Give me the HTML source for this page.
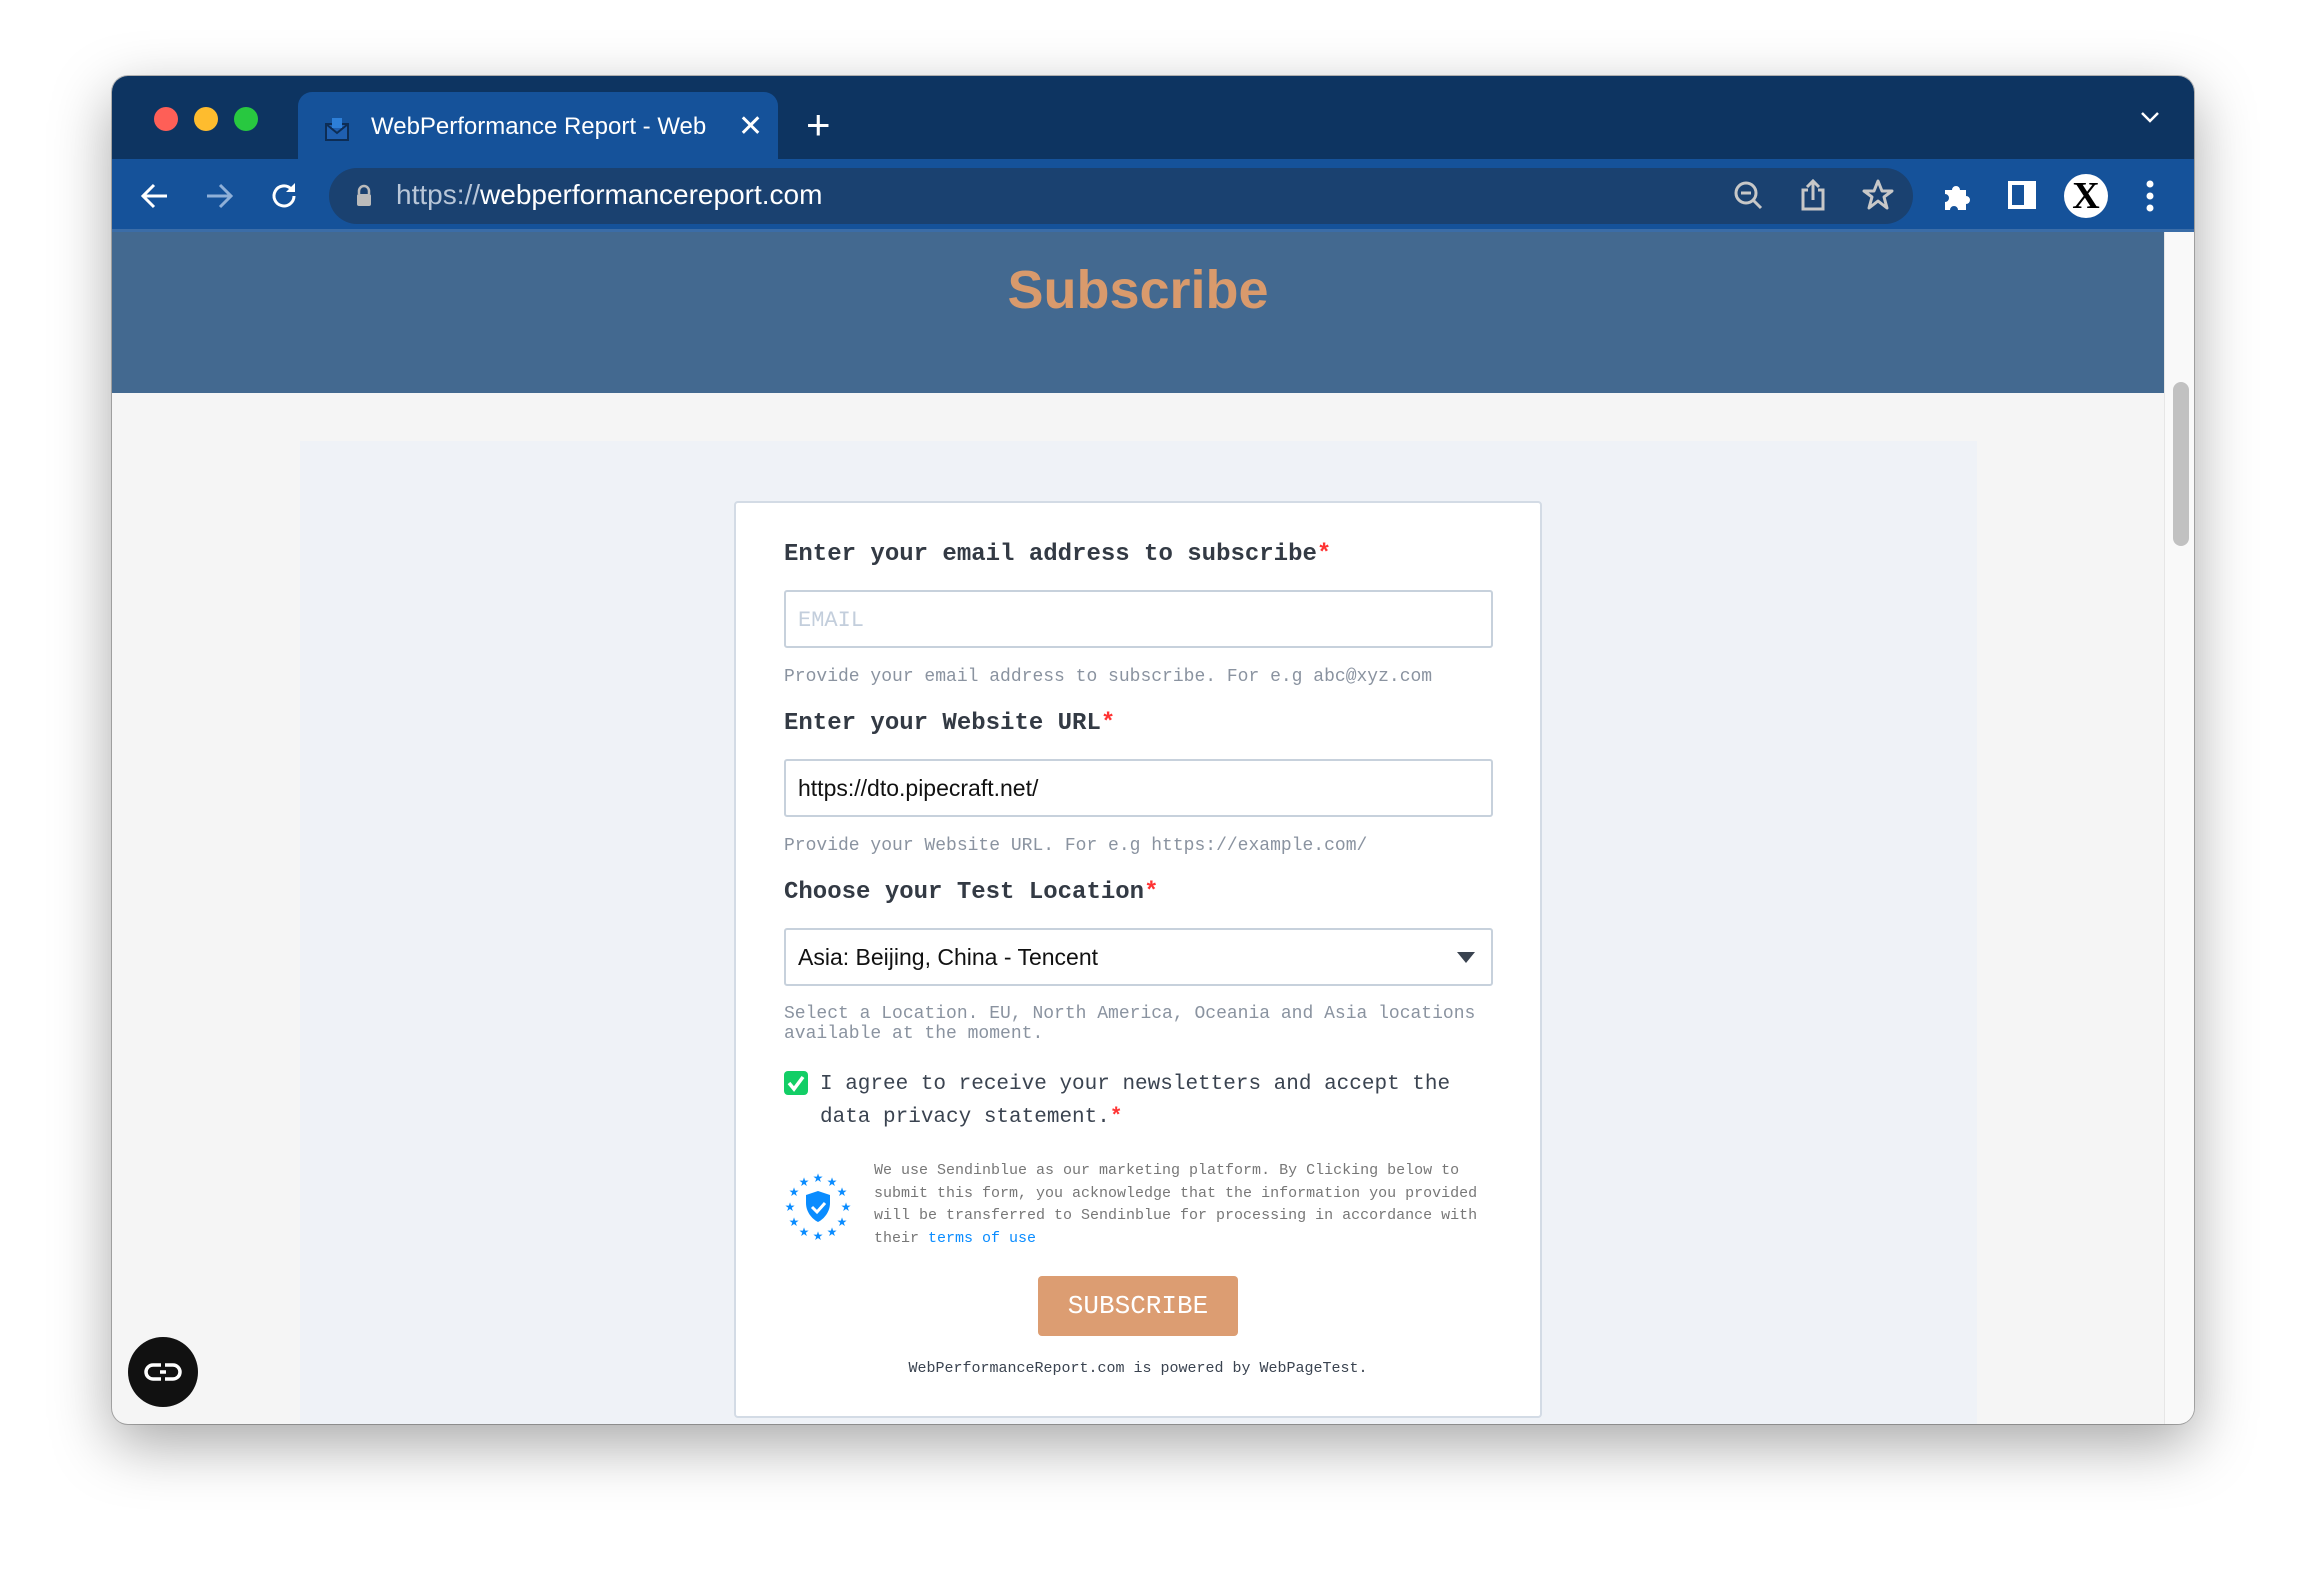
<!DOCTYPE html>
<html><head><meta charset="utf-8"><style>
*{margin:0;padding:0;box-sizing:border-box}
body{width:2306px;height:1572px;background:#fff;position:relative;overflow:hidden;font-family:"Liberation Sans",sans-serif}
.win{position:absolute;left:112px;top:76px;width:2082px;height:1348px;border-radius:16px;overflow:hidden;background:#f5f5f5;box-shadow:0 20px 60px rgba(0,0,0,.35),0 0 0 1px rgba(0,0,0,.25)}
.tabbar{position:absolute;left:0;top:0;width:100%;height:84px;background:#0d3461}
.dot{position:absolute;top:31px;width:24px;height:24px;border-radius:50%}
.tab{position:absolute;left:186px;top:16px;width:480px;height:68px;background:#15529a;border-radius:14px 14px 0 0}
.tab .t{position:absolute;left:73px;top:21px;color:#fff;font-size:24px;white-space:nowrap;width:345px;overflow:hidden}
.toolbar{position:absolute;left:0;top:83px;width:100%;height:73px;background:#15529a;border-bottom:3px solid #3b6da8}
.url{position:absolute;left:217px;top:9px;width:1584px;height:56px;background:#1a4170;border-radius:28px}
.url .t{position:absolute;left:67px;top:11px;font-size:28px;color:#fff}
.header{position:absolute;left:0;top:156px;width:2052px;height:161px;background:#436990}
.header h1{position:absolute;width:100%;top:27px;text-align:center;color:#d99a6c;font-size:54px;font-weight:bold}
.scroll{position:absolute;left:2052px;top:156px;width:30px;height:1192px;background:#f9f9f9;border-left:1px solid #e6e6e6}
.thumb{position:absolute;left:8px;top:150px;width:16px;height:164px;border-radius:8px;background:#c1c1c1}
.panel{position:absolute;left:188px;top:365px;width:1677px;height:1000px;background:#eff2f7}
.card{position:absolute;left:622px;top:425px;width:808px;height:917px;background:#fff;border:2px solid #d3dbe5;border-radius:4px}
.mono{font-family:"Liberation Mono",monospace}
.lbl{position:absolute;left:48px;font-family:"Liberation Mono",monospace;font-weight:bold;font-size:24px;color:#333a44}
.lbl b{color:#f33}
.inp{position:absolute;left:48px;width:709px;height:58px;border:2px solid #c7d1dc;border-radius:3px;font-size:23px;padding:14px 0 0 12px;color:#111}
.help{position:absolute;left:48px;font-family:"Liberation Mono",monospace;font-size:18px;color:#8a93a0;line-height:20px}
</style></head><body>
<div class="win">
 <div class="tabbar">
  <div class="dot" style="left:42px;background:#fe5f57"></div>
  <div class="dot" style="left:82px;background:#febc2e"></div>
  <div class="dot" style="left:122px;background:#28c840"></div>
  <div class="tab">
   <svg style="position:absolute;left:26px;top:24px" width="26" height="26" viewBox="0 0 26 26"><rect x="2" y="8" width="22" height="16" fill="#1f5fb0" stroke="#0d2d55" stroke-width="2"/><path d="M2 8l11 9 11-9" fill="none" stroke="#0d2d55" stroke-width="2"/><rect x="8" y="2" width="10" height="10" fill="#2d7fd8"/></svg>
   <div class="t">WebPerformance Report - Web</div>
   <div style="position:absolute;left:440px;top:17px;color:#fff;font-size:30px">✕</div>
  </div>
  <div style="position:absolute;left:694px;top:28px;color:#fff;font-size:42px;line-height:42px">+</div>
  <svg style="position:absolute;left:2028px;top:34px" width="20" height="14" viewBox="0 0 20 14"><path d="M2 3l8 8 8-8" fill="none" stroke="#fff" stroke-width="2.5"/></svg>
 </div>
 <div class="toolbar">
  <svg style="position:absolute;left:28px;top:22px" width="30" height="30" viewBox="0 0 30 30"><path d="M27 15H4M14 4L3 15l11 11" fill="none" stroke="#fff" stroke-width="3"/></svg>
  <svg style="position:absolute;left:92px;top:22px" width="30" height="30" viewBox="0 0 30 30"><path d="M3 15h23M16 4l11 11-11 11" fill="none" stroke="#8fb0d8" stroke-width="3"/></svg>
  <svg style="position:absolute;left:156px;top:21px" width="32" height="32" viewBox="0 0 32 32"><path d="M26 16a10 10 0 1 1-3-7.2" fill="none" stroke="#fff" stroke-width="3"/><path d="M27 3v9h-9z" fill="#fff"/></svg>
  <div class="url">
   <svg style="position:absolute;left:26px;top:16px" width="18" height="24" viewBox="0 0 18 24"><path d="M4 10V7a5 5 0 0 1 10 0v3" fill="none" stroke="#bbb" stroke-width="2.5"/><rect x="2" y="10" width="14" height="12" rx="2" fill="#bbb"/></svg>
   <div class="t"><span style="color:#b8c6d8">https://</span>webperformancereport.com</div>
   <svg style="position:absolute;left:1404px;top:12px" width="32" height="32" viewBox="0 0 32 32"><circle cx="13" cy="13" r="10" fill="none" stroke="#c8c8c8" stroke-width="3"/><path d="M8 13h10M20 20l8 8" stroke="#c8c8c8" stroke-width="3"/></svg>
   <svg style="position:absolute;left:1470px;top:10px" width="28" height="34" viewBox="0 0 28 34"><path d="M9 12H4v19h20V12h-5M14 22V3M8 9l6-6 6 6" fill="none" stroke="#c8c8c8" stroke-width="3"/></svg>
   <svg style="position:absolute;left:1532px;top:10px" width="34" height="34" viewBox="0 0 34 34"><path d="M17 3l4 10h10l-8 6 3 11-9-7-9 7 3-11-8-6h10z" fill="none" stroke="#c8c8c8" stroke-width="3" stroke-linejoin="round"/></svg>
  </div>
  <svg style="position:absolute;left:1830px;top:21px" width="32" height="32" viewBox="0 0 32 32"><path d="M3 10h7a4 4 0 1 1 8 0h6v6a4 4 0 1 1 0 8v6H16a4 4 0 1 0-8 0H3V22a4 4 0 1 0 0-8z" fill="#fff"/></svg>
  <div style="position:absolute;left:1896px;top:22px;width:28px;height:28px;border:4px solid #fff;border-right-width:12px"></div>
  <div style="position:absolute;left:1952px;top:15px;width:44px;height:44px;border-radius:50%;background:#fff;text-align:center;font:bold 38px/44px 'Liberation Serif',serif;color:#000">X</div>
  <svg style="position:absolute;left:2030px;top:20px" width="16" height="34" viewBox="0 0 16 34"><circle cx="8" cy="5" r="3.5" fill="#fff"/><circle cx="8" cy="17" r="3.5" fill="#fff"/><circle cx="8" cy="29" r="3.5" fill="#fff"/></svg>
 </div>
 <div class="header"><h1>Subscribe</h1></div>
 <div class="scroll"><div class="thumb"></div></div>
 <div class="panel"></div>
 <div class="card">
  <div class="lbl" style="top:38px">Enter your email address to subscribe<b>*</b></div>
  <div class="inp mono" style="top:87px;color:#c3cedc;font-size:22px;padding-top:16px">EMAIL</div>
  <div class="help" style="top:164px">Provide your email address to subscribe. For e.g abc@xyz.com</div>
  <div class="lbl" style="top:207px">Enter your Website URL<b>*</b></div>
  <div class="inp" style="top:256px">https://dto.pipecraft.net/</div>
  <div class="help" style="top:333px">Provide your Website URL. For e.g https://example.com/</div>
  <div class="lbl" style="top:376px">Choose your Test Location<b>*</b></div>
  <div class="inp" style="top:425px">Asia: Beijing, China - Tencent
   <svg style="position:absolute;right:16px;top:22px" width="18" height="11" viewBox="0 0 18 11"><path d="M0 0h18L9 11z" fill="#3a4350"/></svg></div>
  <div class="help" style="top:501px">Select a Location. EU, North America, Oceania and Asia locations<br>available at the moment.</div>
  <div style="position:absolute;left:48px;top:568px;width:24px;height:24px;border-radius:4px;background:#13ce66"><svg width="24" height="24" viewBox="0 0 24 24"><path d="M5 12l5 6 9-12" fill="none" stroke="#fff" stroke-width="3.5"/></svg></div>
  <div class="mono" style="position:absolute;left:84px;top:565px;font-size:21px;line-height:33px;color:#3a4350">I agree to receive your newsletters and accept the<br>data privacy statement.<b style="color:#f33">*</b></div>
  <svg style="position:absolute;left:42px;top:664px" width="80" height="80" viewBox="-40 -40 80 80">
   <path d="M0-16l12 4v8c0 9-6 16-12 19-6-3-12-10-12-19v-8z" fill="#0a8cff"/>
   <path d="M-6 0l5 5 8-9" fill="none" stroke="#fff" stroke-width="3"/>
   <g fill="#0a8cff" font-size="12" text-anchor="middle" font-family="DejaVu Sans">
    <text x="0" y="-25">★</text><text x="14" y="-21">★</text><text x="24" y="-11">★</text><text x="28" y="4">★</text><text x="24" y="19">★</text><text x="14" y="29">★</text><text x="0" y="33">★</text><text x="-14" y="29">★</text><text x="-24" y="19">★</text><text x="-28" y="4">★</text><text x="-24" y="-11">★</text><text x="-14" y="-21">★</text>
   </g>
  </svg>
  <div class="mono" style="position:absolute;left:138px;top:657px;font-size:15px;line-height:22.6px;color:#777">We use Sendinblue as our marketing platform. By Clicking below to<br>submit this form, you acknowledge that the information you provided<br>will be transferred to Sendinblue for processing in accordance with<br>their <span style="color:#0a8cff">terms of use</span></div>
  <div class="mono" style="position:absolute;left:302px;top:773px;width:200px;height:60px;background:#dc9d72;border-radius:4px;color:#fff;font-size:26px;text-align:center;line-height:60px">SUBSCRIBE</div>
  <div class="mono" style="position:absolute;left:0;width:100%;top:857px;text-align:center;font-size:15px;color:#3a4350">WebPerformanceReport.com is powered by WebPageTest.</div>
 </div>
 <div style="position:absolute;left:16px;top:1261px;width:70px;height:70px;border-radius:50%;background:#111"><svg width="70" height="70" viewBox="0 0 70 70"><path d="M33 28h-8a7 7 0 0 0 0 14h8M37 28h8a7 7 0 0 1 0 14h-8" fill="none" stroke="#fff" stroke-width="3.5"/><path d="M32 35h6" stroke="#fff" stroke-width="3.5"/></svg></div>
</div>
</body></html>
